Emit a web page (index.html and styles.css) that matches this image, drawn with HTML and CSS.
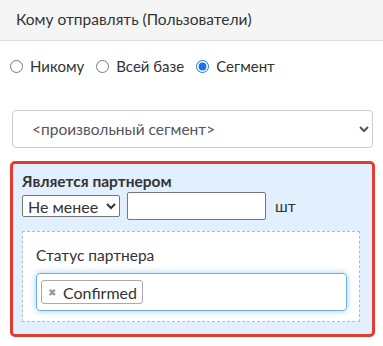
FILE: index.html
```html
<!DOCTYPE html>
<html lang="ru">
<head>
  <meta charset="UTF-8">
  <title>Кому отправлять</title>
  <link rel="stylesheet" href="styles.css">
</head>
<body>
  <div class="panel">
    <div class="panel-heading">Кому отправлять (Пользователи)</div>
    <div class="panel-body">
      <div class="radios">
        <label><input type="radio" name="to"> Никому</label>
        <label><input type="radio" name="to"> Всей базе</label>
        <label><input type="radio" name="to" checked> Сегмент</label>
      </div>

      <select class="segment">
        <option>&lt;произвольный сегмент&gt;</option>
      </select>

      <div class="condition">
        <div class="condition-title">Является партнером</div>
        <div class="condition-row">
          <select class="small-select">
            <option>Не менее</option>
          </select>
          <input type="text" class="count">
          <span class="unit">шт</span>
        </div>
        <div class="sub-box">
          <div class="sub-label">Статус партнера</div>
          <div class="tags">
            <span class="tag"><span class="tag-x">✖</span>Confirmed</span>
          </div>
        </div>
      </div>
    </div>
  </div>
</body>
</html>
```

FILE: styles.css
```css
body {
  margin: 0;
  background: #fff;
  color: #333;
  font-family: Lato, 'Open Sans', sans-serif;
  font-size: 15px;
}

.panel-heading {
  background: #f5f5f5;
  border-bottom: 1px solid #ddd;
  height: 41px;
  box-sizing: border-box;
  padding: 10px 16px 0;
  font-size: 15.5px;
  color: #333;
}

.panel-body {
  padding: 0 8px 0 10px;
}

.radios {
  display: flex;
  align-items: center;
  height: 50px;
  font-size: 15px;
}

.radios label {
  display: flex;
  align-items: center;
  margin-right: 12px;
}

.radios input {
  margin: 0 7px 0 0;
  width: 13px;
  height: 13px;
  accent-color: #1a73e8;
}

.segment {
  display: block;
  width: 361px;
  height: 38px;
  margin: 19px 0 0 2px;
  padding: 0 15px;
  border: 1px solid #ccc;
  border-radius: 4px;
  background: #fff;
  color: #555;
  font-family: inherit;
  font-size: 15.5px;
}

.condition {
  margin-top: 13px;
  width: 365px;
  box-sizing: border-box;
  border: 3px solid #e53a2f;
  border-radius: 5px;
  background: #e1efff;
  padding: 6px 12px 12px 9px;
}

.condition-title {
  font-weight: bold;
  font-size: 15.5px;
  line-height: 22px;
}

.condition-row {
  display: flex;
  align-items: center;
  height: 28px;
}

.small-select {
  width: 98px;
  height: 22px;
  border: 1px solid #777;
  border-radius: 2px;
  background: #fff;
  color: #333;
  font-family: inherit;
  font-size: 16px;
  padding: 0 1px;
}

.count {
  width: 139px;
  height: 28px;
  box-sizing: border-box;
  margin-left: 7px;
  border: 1px solid #777;
  border-radius: 2px;
}

.unit {
  margin-left: 9px;
  font-size: 15.5px;
}

.sub-box {
  margin-top: 11px;
  border: 1px dashed #bbb;
  background: #fff;
  padding: 13px 12px 10px 13px;
}

.sub-label {
  font-size: 15.5px;
  line-height: 20px;
}

.tags {
  margin-top: 8px;
  height: 38px;
  box-sizing: border-box;
  border: 1px solid #66afe9;
  border-radius: 4px;
  box-shadow: 0 0 6px rgba(102, 175, 233, 0.6);
  padding: 0 4px;
  display: flex;
  align-items: center;
}

.tag {
  display: inline-flex;
  align-items: center;
  height: 24px;
  box-sizing: border-box;
  border: 1px solid #aaa;
  border-radius: 3px;
  background: #fff;
  padding: 0 5px 0 6px;
  font-size: 16px;
}

.tag-x {
  color: #999;
  font-size: 10px;
  margin-right: 7px;
}
```
